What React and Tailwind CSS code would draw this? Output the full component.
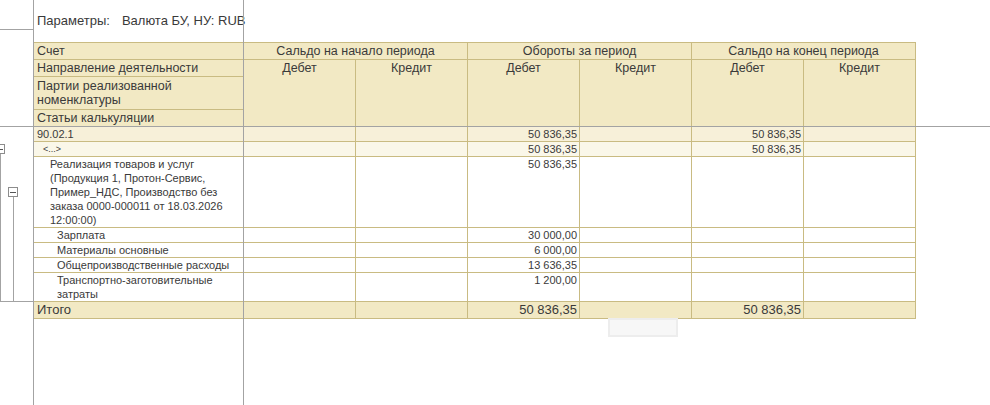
import React from 'react';

// Отчёт в стиле табличного документа 1С: шапка, группировки слева, строки с суммами

const cellBase = 'border-r border-b border-[#c9bb82] overflow-hidden';

const rows = [
  {
    label: '90.02.1',
    h: 'h-[15px]',
    bg: 'bg-[#f7f0d9]',
    labelCls: 'pl-[3px] text-[11px] leading-[14px]',
    vals: ['', '', '50 836,35', '', '50 836,35', ''],
  },
  {
    label: '<...>',
    h: 'h-[15px]',
    bg: 'bg-[#faf7e9]',
    labelCls: 'pl-[9px] text-[9px] leading-[14px]',
    vals: ['', '', '50 836,35', '', '50 836,35', ''],
  },
  {
    label: 'Реализация товаров и услуг (Продукция 1, Протон-Сервис, Пример_НДС, Производство без заказа 0000-000011 от 18.03.2026 12:00:00)',
    h: 'h-[71px]',
    bg: 'bg-white',
    labelCls: 'pl-[16px] pr-[20px] text-[11px] leading-[14px]',
    vals: ['', '', '50 836,35', '', '', ''],
  },
  {
    label: 'Зарплата',
    h: 'h-[15px]',
    bg: 'bg-white',
    labelCls: 'pl-[23px] text-[11px] leading-[14px]',
    vals: ['', '', '30 000,00', '', '', ''],
  },
  {
    label: 'Материалы основные',
    h: 'h-[15px]',
    bg: 'bg-white',
    labelCls: 'pl-[23px] text-[11px] leading-[14px]',
    vals: ['', '', '6 000,00', '', '', ''],
  },
  {
    label: 'Общепроизводственные расходы',
    h: 'h-[15px]',
    bg: 'bg-white',
    labelCls: 'pl-[23px] text-[11px] leading-[14px]',
    vals: ['', '', '13 636,35', '', '', ''],
  },
  {
    label: 'Транспортно-заготовительные затраты',
    h: 'h-[29px]',
    bg: 'bg-white',
    labelCls: 'pl-[23px] pr-[20px] text-[11px] leading-[14px]',
    vals: ['', '', '1 200,00', '', '', ''],
  },
];

function DataRow({ row }) {
  return (
    <div className={`grid grid-cols-[210px_repeat(6,112px)] ${row.h} ${row.bg}`}>
      <div className={`${cellBase} ${row.labelCls}`}>{row.label}</div>
      {row.vals.map((v, i) => (
        <div key={i} className={`${cellBase} text-right pr-[2px] text-[11px] leading-[14px]`}>
          {v}
        </div>
      ))}
    </div>
  );
}

function Header() {
  const hd = `${cellBase} bg-[#f2e9c4]`;
  return (
    <div className="grid grid-cols-[210px_repeat(6,112px)] grid-rows-[17px_17px_33px_17px] text-[12.5px] leading-[16px]">
      <div className={`${hd} col-start-1 row-start-1 pl-[3px]`}>Счет</div>
      <div className={`${hd} col-start-2 col-span-2 row-start-1 text-center`}>Сальдо на начало периода</div>
      <div className={`${hd} col-start-4 col-span-2 row-start-1 text-center`}>Обороты за период</div>
      <div className={`${hd} col-start-6 col-span-2 row-start-1 text-center`}>Сальдо на конец периода</div>

      <div className={`${hd} col-start-1 row-start-2 pl-[3px]`}>Направление деятельности</div>
      <div className={`${hd} col-start-1 row-start-3 pl-[3px] pt-[2px] pr-[30px] leading-[14px]`}>
        Партии реализованной номенклатуры
      </div>
      <div className={`${hd} col-start-1 row-start-4 pl-[3px]`}>Статьи калькуляции</div>

      {['Дебет', 'Кредит', 'Дебет', 'Кредит', 'Дебет', 'Кредит'].map((t, i) => (
        <div key={i} className={`${hd} row-start-2 row-span-3 text-center`} style={{ gridColumnStart: i + 2 }}>
          {t}
        </div>
      ))}
    </div>
  );
}

function MinusBox({ className }) {
  return (
    <div className={`absolute w-[10px] h-[10px] border border-[#8c8c8c] bg-white flex items-center justify-center ${className}`}>
      <div className="w-[6px] h-px bg-[#555]" />
    </div>
  );
}

export default function App() {
  return (
    <div className="relative w-[990px] h-[405px] overflow-hidden bg-white text-[#3a3a3a] font-['Liberation_Sans',Arial,sans-serif]">
      <div className="pl-[33px]">
        {/* Параметры */}
        <div className="h-[42px] pt-[13px] pl-[4px] text-[13px] leading-[16px] flex">
          <span>Параметры:</span>
          <span className="ml-[12px]">Валюта БУ, НУ: RUB</span>
        </div>

        {/* Таблица */}
        <div className="w-[883px] border-l border-t border-[#c9bb82]">
          <Header />
          {rows.map((r, i) => (
            <DataRow key={i} row={r} />
          ))}
          <div className="grid grid-cols-[210px_repeat(6,112px)] h-[17px] bg-[#f2e9c4] text-[13px] leading-[16px]">
            <div className={`${cellBase} pl-[3px]`}>Итого</div>
            {['', '', '50 836,35', '', '50 836,35', ''].map((v, i) => (
              <div key={i} className={`${cellBase} text-right pr-[2px]`}>
                {v}
              </div>
            ))}
          </div>
        </div>
      </div>

      {/* Линии закрепления областей */}
      <div className="absolute left-[33px] top-0 w-px h-full bg-[#a3a3a3]" />
      <div className="absolute left-[243px] top-0 w-px h-full bg-[#a3a3a3]" />
      <div className="absolute left-0 top-[126px] w-full h-px bg-[#a3a3a3]" />
      <div className="absolute left-0 top-[29px] w-[33px] h-px bg-[#a3a3a3]" />

      {/* Группировки */}
      <MinusBox className="left-[-5px] top-[144px]" />
      <div className="absolute left-0 top-[154px] w-px h-[147px] bg-[#a3a3a3]" />
      <MinusBox className="left-[8px] top-[187px]" />
      <div className="absolute left-[13px] top-[197px] w-px h-[104px] bg-[#a3a3a3]" />
      <div className="absolute left-0 top-[301px] w-[33px] h-px bg-[#a3a3a3]" />

      {/* Пустая подсказка под таблицей */}
      <div className="absolute left-[608px] top-[318px] w-[70px] h-[19px] border-2 border-[#ededed] bg-[#f7f7f7]" />
    </div>
  );
}
